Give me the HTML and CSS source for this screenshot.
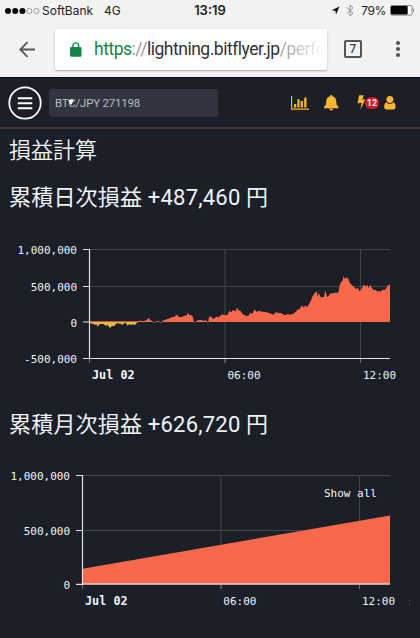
FILE: index.html
```html
<!DOCTYPE html>
<html lang="ja">
<head>
    <meta charset="UTF-8">
    <meta name="viewport" content="width=device-width, initial-scale=1.0">
    <title>損益計算</title>
    <link rel="stylesheet" href="styles.css">
</head>
<body>

<div class="status-bar">
    <div class="carrier">
        <svg width="36" height="8" viewBox="0 0 36 8">
            <g fill="#050505"><circle cx="3" cy="4" r="3"/><circle cx="10.2" cy="4" r="3"/><circle cx="17.4" cy="4" r="3"/></g>
            <g fill="none" stroke="#777" stroke-width=".7"><circle cx="24.3" cy="4" r="2.6"/><circle cx="31.4" cy="4" r="2.6"/></g>
        </svg>
        <span class="carrier-name">SoftBank</span>
        <span class="network">4G</span>
    </div>
    <div class="clock">13:19</div>
    <div class="battery">
        <svg class="location" width="9" height="9" viewBox="0 0 9 9"><path d="M8.5.5 5 8.5 4.4 4.7.5 4.2z" fill="#111"/></svg>
        <svg class="bluetooth" width="8" height="13" viewBox="0 0 8 13"><path d="M.8 3.3 7 9.2 4 12V1l3 2.8L.8 9.7" fill="none" stroke="#888" stroke-width=".9"/></svg>
        <span class="percent">79%</span>
        <svg width="25" height="11" viewBox="0 0 25 11">
            <rect x=".5" y=".5" width="21.5" height="9.6" rx="1.5" fill="#fff" stroke="#555" stroke-width=".7"/>
            <rect x="1" y="1" width="16.7" height="8.6" rx="1" fill="#050505"/>
            <path d="M23.2 3.5q1.5 1.8 0 3.6z" fill="#111"/>
        </svg>
    </div>
</div>

<div class="browser-bar">
    <svg class="back" width="17" height="17" viewBox="0 0 17 17"><path d="M16 8.5H1.5M8.5 1.2 1.3 8.5l7.2 7.3" fill="none" stroke="#555" stroke-width="1.8"/></svg>
    <div class="address">
        <svg class="lock" width="12" height="15" viewBox="0 0 12 15">
            <rect y="5" width="11.5" height="9.7" rx="1.3" fill="#128447"/>
            <path d="M2.9 6V3.7a2.85 2.85 0 0 1 5.7 0V6" fill="none" stroke="#128447" stroke-width="1.4"/>
        </svg>
        <span class="url"><span class="scheme">https</span><span class="slashes">://</span>lightning.bitflyer.jp<span class="path">/perfo</span></span>
    </div>
    <div class="tabs">7</div>
    <svg class="more" width="6" height="18" viewBox="0 0 6 18" fill="#555"><circle cx="3" cy="3" r="2.1"/><circle cx="3" cy="9" r="2.1"/><circle cx="3" cy="15" r="2.1"/></svg>
</div>

<header class="header">
    <svg class="menu" width="34" height="34" viewBox="0 0 34 34" fill="none" stroke="#fff">
        <circle cx="17" cy="17" r="15.7" stroke-width="1.8"/>
        <path d="M9.8 12.3h14.5M9.8 17.3h14.5M9.8 22.3h14.5" stroke-width="2"/>
    </svg>
    <div class="product">
        <span>BTC/JPY 271198</span>
        <svg class="caret" width="6" height="6" viewBox="0 0 6 6"><path d="M.2 1Q3-.2 5.8 1L3.6 5.4H2.8z" fill="#fff"/></svg>
    </div>
    <nav class="icons">
        <svg width="18" height="14" viewBox="0 0 18 14" fill="#f9b72b"><path d="M0 0h1.2v12.4H18v1.3H0zM3 8h2.3v3.4H3zM6.4 3.2h2.2v8.2H6.4zM9.7 5h2.2v6.4H9.7zM13.2 1.5h2.3v9.9h-2.3z"/></svg>
        <svg class="bell" width="15" height="16" viewBox="0 0 15 16" fill="#f9b72b"><path d="M7.2 0c.8 0 1.2.5 1.2 1.2 2.6.6 3.7 2.4 3.8 5.1.1 3.3.9 4.5 2.3 5.7v1.2H0V12c1.5-1.3 2.2-2.4 2.3-5.7C2.4 3.6 3.5 1.8 6 1.2 6 .5 6.4 0 7.2 0zM5.2 13.7h4.1a2.05 1.7 0 0 1-4.1 0z"/></svg>
        <svg class="bolt" width="9" height="15" viewBox="0 0 9 15" fill="#f9b72b"><path d="M2 .3h4.8L5.4 4.8l3-.6L3.3 14.8l1.3-7.4-4 1z"/></svg>
        <span class="badge">12</span>
        <svg class="user" width="12" height="14" viewBox="0 0 12 14" fill="#f9b72b"><circle cx="5.9" cy="3.5" r="3.4"/><path d="M2.3 6.2C.7 7 .2 8.8.2 11.1c0 1.6.8 2.4 2 2.4h7.4c1.2 0 2-.8 2-2.4 0-2.3-.5-4.1-2.1-4.9a4.6 4.6 0 0 1-7.2 0z"/></svg>
    </nav>
</header>

<main>
    <h1>損益計算</h1>

    <section class="daily">
        <h2>累積日次損益 +487,460 円</h2>
        <svg class="chart" width="420" height="155" viewBox="0 235 420 155">
            <path class="grid" d="M90 249.5h300M90 286.5h300M225 250v113M360.5 250v113"/>
            <g transform="translate(0 235) scale(.33333)">
                <path class="loss" d="M269 261V265L280 266 285 270 289 268 293 275 299 267 310 267 318 272 323 270 330 279 336 273 342 274 350 265 362 266 367 270 372 265 378 264 382 272 388 268 394 270 400 268 405 270 410 264 415 261z"/>
                <path class="profit" d="M269 259H412L420 257 430 258 440 256 445 249 452 256 457 258 463 264 469 258 478 259 483 265 488 257 500 253 510 250 517 246 524 246 528 239 533 241 537 247 545 246 552 243 557 241 560 243 563 232 567 240 573 239 579 246 582 264 590 257 600 254 610 257 619 256 624 266 627 246 630 244 634 246 640 252 645 249 650 244 653 248 660 243 668 238 675 241 682 240 688 228 694 232 699 225 707 229 711 218 716 226 722 228 730 240 735 239 739 244 746 242 750 233 756 237 764 223 769 231 777 227 785 230 792 230 800 232 810 235 820 239 828 231 835 234 842 234 848 238 856 241 863 237 870 239 880 236 888 230 892 224 900 222 905 211 912 218 915 211 921 217 930 202 938 184 945 173 950 169 953 185 956 173 962 187 972 186 976 166 981 186 986 183 990 176 1004 173 1015 173 1019 151 1024 139 1027 140 1030 124 1035 132 1038 127 1045 131 1050 145 1060 154 1068 163 1073 158 1078 169 1085 162 1090 149 1096 154 1102 150 1106 160 1111 149 1116 160 1122 166 1128 164 1132 171 1137 167 1142 170 1148 164 1155 165 1163 152 1170 148V261H269z"/>
            </g>
            <path class="axis" d="M83 249.5h6M83 286.5h6M83 322h6M83 358.5h307M89.5 249v110"/>
            <path class="tick" d="M89.5 359v4M225 359v4M360.5 359v4"/>
            <g class="y-label">
                <text x="77" y="254">1,000,000</text>
                <text x="77" y="290.5">500,000</text>
                <text x="77" y="326.5">0</text>
                <text x="77" y="363">-500,000</text>
            </g>
            <text class="date" x="92" y="379.4">Jul 02</text>
            <text x="227.5" y="379.4">06:00</text>
            <text x="363" y="379.4">12:00</text>
        </svg>
    </section>

    <section class="monthly">
        <h2>累積月次損益 +626,720 円</h2>
        <svg class="chart" width="420" height="155" viewBox="0 461 420 155">
            <path class="grid" d="M83 475.5h307M83 530.5h307M221 476v113M359.5 476v113"/>
            <path class="profit" d="M82.5 568.7 390 515.6V584H82.5z"/>
            <path class="axis base" d="M83 584h307"/>
            <path class="axis" d="M76 475.5h6M76 530.5h6M76 584.3h6M82.5 475v110"/>
            <path class="tick" d="M82.5 585v4M221 585v4M359.5 585v4"/>
            <g class="y-label">
                <text x="70" y="480">1,000,000</text>
                <text x="70" y="535">500,000</text>
                <text x="70" y="589">0</text>
            </g>
            <text x="324" y="497">Show all</text>
            <text class="date" x="85" y="605">Jul 02</text>
            <text x="223.3" y="605">06:00</text>
            <text x="362" y="605">12:00</text>
            <path d="M409.5 600v1M409.5 603.5v1" stroke="#58616d"/>
        </svg>
    </section>
</main>

</body>
</html>
```
FILE: styles.css
```css
* {
    box-sizing: border-box;
}

body {
    margin: 0;
    height: 638px;
    overflow: hidden;
    background: #1b1f28;
    color: #f2f4f6;
    font-family: Roboto, "Noto Sans CJK JP", sans-serif;
}

svg {
    display: block;
    flex-shrink: 0;
}

.status-bar {
    display: grid;
    grid-template-columns: 1fr 40px 1fr;
    align-items: center;
    height: 21px;
    padding: 0 5px;
    background: #f2f2f2;
    color: #222;
    font: 12px/21px Inter, sans-serif;
}

.carrier,
.battery {
    display: flex;
    align-items: center;
}

.carrier-name {
    width: 62px;
    margin-left: 1px;
}

.clock {
    font-size: 13px;
    font-weight: 600;
    text-align: center;
    white-space: nowrap;
}

.battery {
    justify-content: flex-end;
}

.bluetooth {
    margin: 0 7px 0 6px;
}

.percent {
    margin-right: 4px;
    letter-spacing: -0.4px;
}

.browser-bar {
    display: flex;
    align-items: center;
    height: 56px;
    padding: 0 19px;
    background: #f2f2f2;
}

.address {
    display: flex;
    align-items: center;
    width: 272px;
    height: 41px;
    margin: 0 17px 0 19px;
    padding: 0 8px 0 15px;
    overflow: hidden;
    background: #fff;
    border-radius: 1px;
    box-shadow: 0 1px 2px rgba(0, 0, 0, 0.3);
}

.url {
    margin-left: 12px;
    color: #333;
    font-size: 17.5px;
    letter-spacing: -0.48px;
    white-space: nowrap;
}

.scheme {
    color: #128447;
}

.slashes {
    color: #999;
}

.path {
    background: linear-gradient(to right, #999, #fff);
    background-clip: text;
    -webkit-background-clip: text;
    color: transparent;
}

.tabs {
    width: 18px;
    height: 18px;
    border: 2px solid #555;
    border-radius: 2px;
    color: #444;
    font-size: 12px;
    font-weight: 500;
    line-height: 14px;
    text-align: center;
}

.more {
    margin-left: 33px;
}

.header {
    display: flex;
    align-items: center;
    height: 52px;
    padding: 0 8px;
    border-top: 1px solid #0b0e14;
    border-bottom: 2px solid #4c3439;
}

.product {
    position: relative;
    width: 169px;
    height: 28px;
    margin-left: 7px;
    padding-left: 6px;
    background: #31353f;
    border-radius: 3px;
    color: #b8bcc4;
    font-size: 11.5px;
    letter-spacing: -0.22px;
    line-height: 28px;
}

.caret {
    position: absolute;
    left: 19px;
    top: 10px;
}

.icons {
    display: flex;
    align-items: center;
    margin-left: 73px;
}

.bell {
    margin-left: 15px;
}

.bolt {
    margin-left: 18px;
}

.badge {
    width: 14px;
    height: 12px;
    margin-left: -1px;
    background: #d91920;
    border-radius: 6px;
    color: #fff;
    font-size: 9px;
    font-weight: 700;
    line-height: 12px;
    text-align: center;
}

.user {
    margin-left: 5px;
}

h1,
h2 {
    margin: 0;
    padding-left: 9px;
    font-size: 22px;
    font-weight: 350;
    line-height: 32px;
    white-space: nowrap;
}

h1 {
    padding-top: 6px;
}

h2 {
    font-weight: 400;
    letter-spacing: 0.2px;
}

.daily {
    padding-top: 15px;
}

.monthly {
    padding-top: 19px;
}

.chart {
    margin-top: 21px;
    font-family: "DejaVu Sans Mono", monospace;
    font-size: 11px;
    fill: #f2f4f6;
}

.monthly .chart {
    margin-top: 20px;
}

.grid {
    stroke: #414650;
}

.profit {
    fill: #f8694c;
}

.loss {
    fill: #eeb63e;
}

.axis {
    fill: none;
    stroke: #dfe2e6;
    stroke-width: 1.2;
}

.base {
    stroke: #f6cdc5;
    stroke-width: 1.6;
}

.tick {
    stroke: #737781;
}

.y-label {
    text-anchor: end;
}

.date {
    font-size: 11.8px;
    font-weight: 700;
}
```
